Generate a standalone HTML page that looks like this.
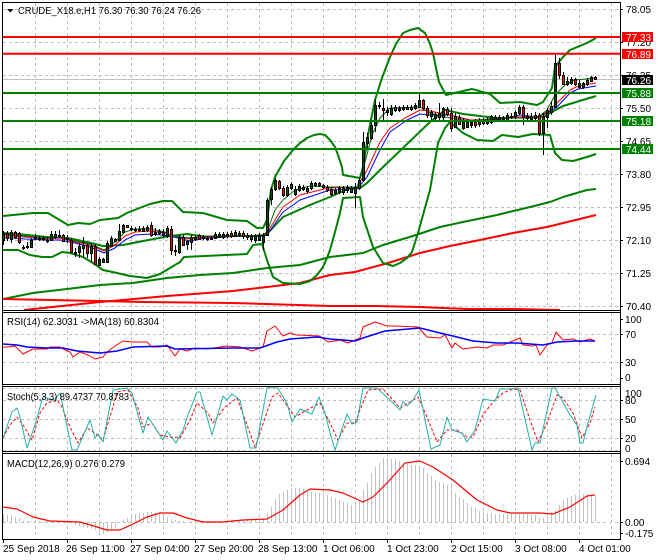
<!DOCTYPE html>
<html><head><meta charset="utf-8"><style>
html,body{margin:0;padding:0;background:#fff}
svg{display:block}
text{font-family:"Liberation Sans",sans-serif;font-size:10px;fill:#000}
.g{stroke:#c0c0c0;stroke-width:1;stroke-dasharray:3 3;fill:none}
.f{stroke:#000;stroke-width:1;fill:none}
.b{fill:none;stroke:#008000;stroke-width:2}
.r{fill:none;stroke:#f00;stroke-width:2}
polyline{stroke-linejoin:round}
.h{font-size:10.5px}
</style></head><body>
<svg width="660" height="560" viewBox="0 0 660 560" xmlns="http://www.w3.org/2000/svg">
<defs>
<clipPath id="c1"><rect x="3" y="3" width="617" height="307"/></clipPath>
<clipPath id="c3"><rect x="3" y="387" width="617" height="64"/></clipPath>
</defs>
<rect width="660" height="560" fill="#fff"/>
<!-- grid -->
<path class="g" d="M3 9.5H620M3 42.5H620M3 75.5H620M3 108.5H620M3 141.5H620M3 174.5H620M3 207.5H620M3 240.5H620M3 273.5H620M3 306.5H620M3 334.5H620M3 362.5H620M3 388.5H620M3 400.5H620M3 419.5H620M3 438.5H620M3 450.5H620M3 522.5H620"/>
<path class="g" d="M35.5 3V310M67.5 3V310M99.5 3V310M131.5 3V310M163.5 3V310M195.5 3V310M227.5 3V310M259.5 3V310M291.5 3V310M323.5 3V310M355.5 3V310M387.5 3V310M419.5 3V310M451.5 3V310M483.5 3V310M515.5 3V310M547.5 3V310M579.5 3V310M611.5 3V310M35.5 313V384M67.5 313V384M99.5 313V384M131.5 313V384M163.5 313V384M195.5 313V384M227.5 313V384M259.5 313V384M291.5 313V384M323.5 313V384M355.5 313V384M387.5 313V384M419.5 313V384M451.5 313V384M483.5 313V384M515.5 313V384M547.5 313V384M579.5 313V384M611.5 313V384M35.5 387V451M67.5 387V451M99.5 387V451M131.5 387V451M163.5 387V451M195.5 387V451M227.5 387V451M259.5 387V451M291.5 387V451M323.5 387V451M355.5 387V451M387.5 387V451M419.5 387V451M451.5 387V451M483.5 387V451M515.5 387V451M547.5 387V451M579.5 387V451M611.5 387V451M35.5 454V539M67.5 454V539M99.5 454V539M131.5 454V539M163.5 454V539M195.5 454V539M227.5 454V539M259.5 454V539M291.5 454V539M323.5 454V539M355.5 454V539M387.5 454V539M419.5 454V539M451.5 454V539M483.5 454V539M515.5 454V539M547.5 454V539M579.5 454V539M611.5 454V539"/>
<!-- current price -->
<path d="M3 79.5H620" stroke="#c0c0c0" fill="none"/>
<g clip-path="url(#c1)">
<!-- long MAs -->
<polyline class="b" points="3,299 33,293 67,289 100,285 133,283 167,278 200,275 233,273 267,268 300,265 330,257 347,255 363,253 383,245 413,236 440,227 463,222 497,215 530,207 550,202 563,197 587,190 596,189"/>
<polyline class="r" points="24,310 100,302 167,296 233,291 267,287 300,283 330,275 355,272 388,263 420,253 450,246 480,240 513,233 547,227 596,215"/>
<polyline class="r" points="3,299 143,302 233,303 330,306 375,306 420,307 467,309 513,309 560,310"/>
<!-- bollinger -->
<polyline class="b" points="3,216 33,213 48,213 58,219 68,225 78,223 90,224 100,220 118,218 127,213 137,209 150,204 163,201 172,201 183,212 203,213 227,220 247,221 257,228 263,228 267,220 271,190 275,177 284,161 293,150 300,143 307,138 314,135 320,134 325,135 330,140 335,147 338,155 342,167 343,175 360,178 363,167 369,130 375,100 382,78 390,57 396,44 403,33 410,30 418,28 425,33 430,44 433,53 436,68 439,82 446,95 463,91 472,89 490,94 500,103 520,102 537,105 543,102 552,88 555,67 563,57 570,50 587,43 596,38"/>
<polyline class="b" points="3,250 18,250 30,255 42,257 52,257 62,252 70,253 83,257 93,263 103,270 117,273 130,276 147,278 160,274 170,268 180,262 184,257 247,254 253,245 262,244 267,260 273,277 283,283 300,284 310,281 317,275 323,267 327,258 330,250 335,232 340,213 343,198 360,197 363,217 373,247 383,263 393,266 400,263 407,258 412,252 418,233 423,215 430,190 438,143 445,128 450,122 463,133 477,140 493,141 502,135 518,137 533,134 550,135 555,153 562,160 573,161 587,157 596,154"/>
<polyline class="b" points="3,233 17,234 47,237 68,238 87,242 103,246 123,245 143,241 170,236 187,234 207,237 233,236 260,236 267,234 283,217 310,205 330,197 350,188 360,188 367,183 380,170 430,122 445,110 463,114 497,118 543,117 550,113 563,106 596,96"/>
<!-- small MAs -->
<polyline fill="none" stroke="#0000ff" points="3,237 25,239 45,240 60,240 75,243 90,247 104,253 115,248 125,240 135,235 150,234 170,236 190,241 207,238 240,236 262,236 267,235 283,212 300,200 330,190 357,189 367,177 380,150 390,132 407,120 420,114 430,115 450,115 470,120 497,120 510,117 520,115 537,117 547,113 557,107 570,93 578,89 596,86"/>
<polyline fill="none" stroke="#ff0000" points="3,235 25,237 45,239 60,238 75,242 90,245 104,251 115,245 125,236 135,232 150,231 165,233 172,236 190,239 207,237 240,236 262,235 267,233 283,207 300,195 328,188 357,187 367,170 380,142 390,128 405,118 420,110 430,111 450,115 470,120 497,119 510,117 537,117 547,112 557,103 570,90 578,86 596,83"/>
<polyline fill="none" stroke="#006400" points="3,234 25,236 45,238 60,237 75,241 90,244 104,250 115,242 125,232 135,229 150,229 165,232 172,236 190,238 207,236 240,236 262,235 267,232 275,210 283,200 295,190 310,186 328,187 357,187 363,170 372,135 380,118 390,108 420,107 430,113 445,117 470,121 497,118 537,118 547,110 555,95 565,85 575,80 596,78"/>
<!-- wicks -->
<path stroke="#000" fill="none" d="M3.5 231V245M7.5 231V241M11.5 230V243M15.5 231V239M19.5 232V244M23.5 245V250M27.5 242V249M31.5 238V247M35.5 234V240M39.5 236V241M43.5 236V241M47.5 237V243M51.5 231V241M55.5 231V239M59.5 230V238M63.5 234V242M67.5 235V243M71.5 238V253M75.5 248V257M79.5 243V258M83.5 237V257M87.5 243V258M91.5 243V262M95.5 244V265M99.5 257V265M103.5 258V262M107.5 241V263M111.5 236V247M115.5 238V242M119.5 224V241M123.5 224V233M127.5 225V228M131.5 226V231M135.5 227V232M139.5 226V232M143.5 226V232M147.5 225V232M151.5 222V237M155.5 228V236M159.5 229V235M163.5 229V237M167.5 226V238M171.5 226V255M175.5 245V256M179.5 235V254M183.5 235V246M187.5 240V250M191.5 235V250M195.5 235V241M199.5 234V240M203.5 235V240M207.5 236V241M211.5 236V240M215.5 232V239M219.5 232V238M223.5 232V239M227.5 232V238M231.5 231V238M235.5 230V237M239.5 231V237M243.5 231V239M247.5 233V240M251.5 234V242M255.5 234V243M259.5 233V241M263.5 233V250M267.5 198V236M271.5 187V205M275.5 178V191M279.5 180V190M283.5 186V197M287.5 185V197M291.5 182V190M295.5 186V196M299.5 184V192M303.5 185V191M307.5 186V193M311.5 181V190M315.5 182V187M319.5 182V187M323.5 184V189M327.5 185V192M331.5 187V196M335.5 188V195M339.5 186V194M343.5 186V195M347.5 185V193M351.5 186V193M355.5 183V208M359.5 178V190M363.5 132V182M367.5 133V150M371.5 122V140M375.5 100V132M379.5 102V109M383.5 99V120M387.5 107V116M391.5 105V116M395.5 105V112M399.5 106V112M403.5 105V111M407.5 105V110M411.5 105V111M415.5 103V110M419.5 94V108M423.5 99V110M427.5 106V118M431.5 110V120M435.5 112V122M439.5 103V120M443.5 107V121M447.5 107V116M451.5 108V132M455.5 113V128M459.5 115V125M463.5 118V130M467.5 119V128M471.5 120V128M475.5 119V128M479.5 118V127M483.5 118V125M487.5 117V125M491.5 115V124M495.5 115V122M499.5 115V121M503.5 116V122M507.5 113V122M511.5 113V119M515.5 110V119M519.5 105V115M523.5 105V125M527.5 113V122M531.5 113V122M535.5 112V122M539.5 113V136M543.5 113V155M547.5 108V128M551.5 102V115M555.5 55V108M559.5 58V79M563.5 72V85M567.5 77V86M571.5 77V85M575.5 78V86M579.5 80V88M583.5 82V89M587.5 78V86M591.5 76V82M595.5 76V80"/>
<!-- bull / neutral bodies -->
<path fill="#005500" stroke="#000" d="M2.5 233.5h2v7h-2zM10.5 232.5h2v7h-2zM22.5 247.5h2v1h-2zM26.5 246.5h2v1h-2zM30.5 240.5h2v7h-2zM34.5 237.5h2v1h-2zM38.5 238.5h2v1h-2zM42.5 238.5h2v1h-2zM46.5 240.5h2v1h-2zM50.5 234.5h2v6h-2zM54.5 234.5h2v3h-2zM58.5 235.5h2v1h-2zM66.5 238.5h2v1h-2zM74.5 252.5h2v1h-2zM78.5 246.5h2v6h-2zM82.5 245.5h2v3h-2zM90.5 246.5h2v7h-2zM98.5 259.5h2v6h-2zM102.5 259.5h2v3h-2zM106.5 243.5h2v19h-2zM110.5 238.5h2v8h-2zM114.5 239.5h2v2h-2zM118.5 231.5h2v9h-2zM122.5 225.5h2v7h-2zM130.5 228.5h2v1h-2zM134.5 229.5h2v1h-2zM138.5 229.5h2v1h-2zM142.5 228.5h2v3h-2zM146.5 227.5h2v3h-2zM154.5 232.5h2v2h-2zM158.5 231.5h2v2h-2zM162.5 232.5h2v3h-2zM166.5 228.5h2v8h-2zM174.5 250.5h2v1h-2zM178.5 237.5h2v15h-2zM186.5 241.5h2v3h-2zM190.5 237.5h2v5h-2zM194.5 237.5h2v2h-2zM202.5 237.5h2v1h-2zM206.5 238.5h2v1h-2zM210.5 238.5h2v1h-2zM214.5 234.5h2v4h-2zM218.5 234.5h2v3h-2zM222.5 234.5h2v3h-2zM226.5 234.5h2v2h-2zM234.5 232.5h2v4h-2zM238.5 233.5h2v2h-2zM246.5 235.5h2v2h-2zM250.5 236.5h2v3h-2zM254.5 236.5h2v4h-2zM258.5 235.5h2v5h-2zM262.5 235.5h2v7h-2zM266.5 200.5h2v35h-2zM270.5 189.5h2v10h-2zM274.5 180.5h2v9h-2zM286.5 187.5h2v8h-2zM290.5 184.5h2v4h-2zM294.5 189.5h2v5h-2zM298.5 186.5h2v4h-2zM302.5 187.5h2v2h-2zM306.5 188.5h2v3h-2zM310.5 183.5h2v5h-2zM314.5 183.5h2v2h-2zM322.5 185.5h2v2h-2zM334.5 190.5h2v3h-2zM338.5 188.5h2v4h-2zM342.5 188.5h2v4h-2zM346.5 187.5h2v3h-2zM350.5 188.5h2v4h-2zM354.5 187.5h2v6h-2zM358.5 180.5h2v8h-2zM362.5 142.5h2v38h-2zM366.5 137.5h2v6h-2zM370.5 125.5h2v13h-2zM374.5 105.5h2v20h-2zM378.5 105.5h2v1h-2zM386.5 110.5h2v2h-2zM390.5 108.5h2v6h-2zM394.5 107.5h2v3h-2zM398.5 108.5h2v2h-2zM402.5 107.5h2v2h-2zM406.5 107.5h2v2h-2zM410.5 107.5h2v2h-2zM414.5 105.5h2v3h-2zM418.5 100.5h2v7h-2zM430.5 112.5h2v4h-2zM434.5 114.5h2v4h-2zM438.5 113.5h2v4h-2zM442.5 108.5h2v9h-2zM454.5 116.5h2v11h-2zM462.5 122.5h2v6h-2zM466.5 122.5h2v5h-2zM470.5 122.5h2v3h-2zM478.5 120.5h2v4h-2zM486.5 120.5h2v3h-2zM490.5 116.5h2v6h-2zM494.5 117.5h2v3h-2zM498.5 117.5h2v2h-2zM502.5 118.5h2v2h-2zM506.5 115.5h2v5h-2zM510.5 116.5h2v1h-2zM514.5 112.5h2v4h-2zM518.5 107.5h2v6h-2zM526.5 116.5h2v2h-2zM530.5 116.5h2v3h-2zM534.5 115.5h2v3h-2zM542.5 116.5h2v17h-2zM546.5 110.5h2v7h-2zM550.5 106.5h2v6h-2zM554.5 63.5h2v44h-2zM566.5 81.5h2v3h-2zM570.5 79.5h2v4h-2zM578.5 83.5h2v4h-2zM582.5 83.5h2v4h-2zM586.5 80.5h2v4h-2zM590.5 77.5h2v4h-2z"/>
<!-- bear bodies -->
<path fill="#ff0000" stroke="#000" d="M6.5 233.5h2v5h-2zM14.5 232.5h2v5h-2zM18.5 233.5h2v9h-2zM62.5 235.5h2v6h-2zM70.5 240.5h2v12h-2zM86.5 245.5h2v8h-2zM94.5 246.5h2v18h-2zM126.5 225.5h2v2h-2zM150.5 225.5h2v10h-2zM170.5 229.5h2v21h-2zM182.5 237.5h2v8h-2zM198.5 235.5h2v4h-2zM230.5 233.5h2v3h-2zM242.5 233.5h2v3h-2zM278.5 181.5h2v7h-2zM282.5 188.5h2v7h-2zM318.5 183.5h2v2h-2zM326.5 187.5h2v3h-2zM330.5 189.5h2v5h-2zM382.5 108.5h2v2h-2zM422.5 100.5h2v8h-2zM426.5 108.5h2v7h-2zM446.5 109.5h2v5h-2zM450.5 113.5h2v15h-2zM458.5 117.5h2v7h-2zM474.5 120.5h2v5h-2zM482.5 120.5h2v3h-2zM522.5 107.5h2v10h-2zM538.5 115.5h2v18h-2zM558.5 63.5h2v12h-2zM562.5 75.5h2v9h-2zM574.5 79.5h2v5h-2zM594.5 77.5h2v2h-2z"/>
</g>
<!-- levels -->
<path d="M3 37H620M3 53.7H620" stroke="#f00" stroke-width="2" fill="none"/>
<path d="M3 93H620M3 121H620M3 149H620" stroke="#008000" stroke-width="2" fill="none"/>
<!-- RSI -->
<polyline fill="none" stroke="#ff0000" points="3,347 8,347 15,346 23,354 33,349 47,349 50,347 60,347 63,349 70,352 73,357 80,352 88,355 95,359 103,357 107,352 115,346 123,341 132,342 147,342 152,347 160,347 167,345 175,356 180,349 187,351 195,348 207,349 227,346 240,347 252,351 263,347 267,331 275,326 283,336 290,333 297,335 320,336 328,342 340,340 348,343 360,338 363,327 375,322 387,326 395,326 418,327 427,337 440,338 445,335 452,348 455,343 463,349 477,347 487,348 493,345 503,345 520,338 523,345 533,346 536,345 540,355 547,345 552,343 556,332 563,340 573,339 580,342 590,339 595,341"/>
<polyline fill="none" stroke="#0000ff" stroke-width="1.5" points="3,344 17,345 27,347 47,348 63,348 77,351 100,353 117,351 133,347 167,346 175,349 233,348 260,348 277,342 290,339 317,337 330,339 355,341 363,338 385,331 420,328 440,333 453,336 473,341 497,343 517,343 543,345 557,342 577,341 595,341"/>
<!-- Stoch -->
<g clip-path="url(#c3)">
<polyline fill="none" stroke="#ff0000" stroke-dasharray="3 2" points="3,438 10,425 17,417 23,425 32,440 40,413 47,403 57,400 62,407 70,427 78,443 87,428 95,433 103,440 112,410 117,392 128,390 138,408 143,427 152,423 160,435 170,437 180,438 190,420 197,403 208,413 213,423 225,407 237,398 247,425 255,447 262,427 272,397 278,393 288,407 295,417 307,410 320,403 330,423 338,440 347,423 355,423 360,410 368,390 383,389 400,408 410,402 418,397 427,417 437,442 447,430 457,430 467,437 473,437 483,415 493,402 503,393 513,389 520,390 530,420 538,442 547,423 557,395 563,398 573,413 582,438 590,423 595,407"/>
<polyline fill="none" stroke="#20b2aa" stroke-width="1" points="3,438 12,412 17,408 20,417 27,448 35,425 42,400 44,396 50,400 55,399 60,393 72,450 77,450 90,420 95,438 98,434 103,442 113,390 127,388 132,393 143,433 148,417 163,440 167,431 176,443 183,430 188,415 197,392 200,392 212,435 223,396 227,400 232,394 240,400 250,448 256,448 267,388 277,387 287,403 292,422 300,409 312,414 319,397 325,413 330,433 335,450 347,414 352,424 357,422 363,388 377,388 393,403 400,410 403,401 407,406 413,400 419,390 431,449 440,445 447,417 452,430 462,433 467,442 475,430 483,399 495,401 500,389 510,389 518,388 532,450 535,443 540,443 552,388 555,388 570,415 577,425 580,443 583,443 588,423 596,395"/>
</g>
<!-- MACD histogram -->
<path stroke="#c0c0c0" fill="none" d="M3.5 522V514M7.5 522V515M11.5 522V515M15.5 522V517M19.5 522V518M23.5 522V521M27.5 522V521M31.5 522V521M35.5 522V521M39.5 522V521M43.5 522V521M47.5 522V521M51.5 522V521M55.5 522V521M59.5 522V521M63.5 522V521M67.5 522V521M71.5 522V523M75.5 522V525M79.5 522V526M83.5 522V527M87.5 522V528M91.5 522V529M95.5 522V530M99.5 522V531M103.5 522V534M107.5 522V532M111.5 522V530M115.5 522V528M119.5 522V523M123.5 522V519M127.5 522V518M131.5 522V516M135.5 522V514M139.5 522V513M143.5 522V513M147.5 522V512M151.5 522V512M155.5 522V513M159.5 522V514M163.5 522V514M167.5 522V517M171.5 522V519M175.5 522V520M179.5 522V521M183.5 522V521M187.5 522V521M191.5 522V521M195.5 522V521M199.5 522V521M203.5 522V521M207.5 522V521M211.5 522V521M215.5 522V521M219.5 522V521M223.5 522V521M227.5 522V520M231.5 522V520M235.5 522V520M239.5 522V520M243.5 522V520M247.5 522V520M251.5 522V520M255.5 522V520M259.5 522V520M263.5 522V519M267.5 522V513M271.5 522V507M275.5 522V499M279.5 522V494M283.5 522V492M287.5 522V490M291.5 522V488M295.5 522V488M299.5 522V488M303.5 522V489M307.5 522V490M311.5 522V492M315.5 522V493M319.5 522V493M323.5 522V494M327.5 522V495M331.5 522V497M335.5 522V498M339.5 522V500M343.5 522V502M347.5 522V503M351.5 522V505M355.5 522V505M359.5 522V500M363.5 522V490M367.5 522V483M371.5 522V473M375.5 522V467M379.5 522V463M383.5 522V458M387.5 522V458M391.5 522V459M395.5 522V459M399.5 522V461M403.5 522V463M407.5 522V464M411.5 522V465M415.5 522V465M419.5 522V466M423.5 522V468M427.5 522V473M431.5 522V476M435.5 522V480M439.5 522V482M443.5 522V483M447.5 522V485M451.5 522V487M455.5 522V493M459.5 522V497M463.5 522V499M467.5 522V503M471.5 522V507M475.5 522V508M479.5 522V511M483.5 522V512M487.5 522V513M491.5 522V513M495.5 522V514M499.5 522V514M503.5 522V514M507.5 522V514M511.5 522V514M515.5 522V514M519.5 522V514M523.5 522V514M527.5 522V514M531.5 522V515M535.5 522V515M539.5 522V518M543.5 522V518M547.5 522V516M551.5 522V512M555.5 522V510M559.5 522V505M563.5 522V500M567.5 522V498M571.5 522V496M575.5 522V495M579.5 522V494M583.5 522V494M587.5 522V494M591.5 522V495M595.5 522V496"/>
<polyline fill="none" stroke="#ff0000" stroke-width="1.2" points="3,507 17,509 33,517 50,521 80,522 97,527 107,530 120,530 133,524 147,517 160,513 173,513 187,518 203,522 223,522 243,520 267,519 283,510 300,495 310,489 330,490 343,493 363,502 373,497 388,482 405,463 420,461 433,467 453,480 477,500 497,510 510,513 540,513 553,514 570,507 587,496 595,495"/>
<!-- frames -->
<path class="f" d="M2.5 2.5H620.5V539.5H2.5ZM2.5 310.5H620.5M2.5 312.5H620.5M2.5 384.5H620.5M2.5 386.5H620.5M2.5 451.5H620.5M2.5 453.5H620.5"/>
<!-- axis ticks -->
<path class="f" d="M620 9.5h3M620 42.5h3M620 75.5h3M620 108.5h3M620 141.5h3M620 174.5h3M620 207.5h3M620 240.5h3M620 273.5h3M620 306.5h3M620 319.5h3M620 334.5h3M620 362.5h3M620 378.5h3M620 400.5h3M620 419.5h3M620 438.5h3M620 461.5h3M620 522.5h3M620 533.5h3M3.5 539v4M67.5 539v4M131.5 539v4M195.5 539v4M259.5 539v4M323.5 539v4M387.5 539v4M451.5 539v4M515.5 539v4M579.5 539v4"/>
<!-- header -->
<path d="M7 9h6.5l-3.2 3.5z" fill="#000"/>
<text class="h" x="18" y="14" textLength="183" lengthAdjust="spacingAndGlyphs">CRUDE_X18.e,H1  76.30 76.30 76.24 76.26</text>
<text class="h" x="7" y="325" textLength="152" lengthAdjust="spacingAndGlyphs">RSI(14) 62.3031  -&gt;MA(18) 60.8304</text>
<text class="h" x="7" y="400" textLength="122" lengthAdjust="spacingAndGlyphs">Stoch(5,3,3) 89.4737 70.8783</text>
<text class="h" x="7" y="467" textLength="118" lengthAdjust="spacingAndGlyphs">MACD(12,26,9) 0.276 0.279</text>
<!-- price labels -->
<text x="626" y="13">78.05</text>
<text x="626" y="46">77.20</text>
<text x="626" y="79">76.35</text>
<text x="626" y="112">75.50</text>
<text x="626" y="145">74.65</text>
<text x="626" y="178">73.80</text>
<text x="626" y="211">72.95</text>
<text x="626" y="244">72.10</text>
<text x="626" y="277">71.25</text>
<text x="626" y="310">70.40</text>
<rect x="622" y="32" width="31" height="10" fill="#f00"/><text x="626" y="41" style="fill:#fff">77.33</text>
<rect x="622" y="49" width="31" height="10" fill="#f00"/><text x="626" y="58" style="fill:#fff">76.89</text>
<rect x="622" y="75" width="31" height="10" fill="#000"/><text x="626" y="84" style="fill:#fff">76.26</text>
<rect x="622" y="88" width="31" height="10" fill="#008000"/><text x="626" y="97" style="fill:#fff">75.88</text>
<rect x="622" y="116" width="31" height="10" fill="#008000"/><text x="626" y="125" style="fill:#fff">75.18</text>
<rect x="622" y="144" width="31" height="10" fill="#008000"/><text x="626" y="153" style="fill:#fff">74.44</text>
<text x="625" y="323">100</text><text x="625" y="338">70</text><text x="625" y="366">30</text><text x="625" y="381">0</text>
<text x="625" y="397">100</text><text x="625" y="404">80</text><text x="625" y="423">50</text><text x="625" y="442">20</text><text x="625" y="452">0</text>
<text x="625" y="465">0.694</text><text x="625" y="526">0.00</text><text x="625" y="537">-0.175</text>
<!-- time labels -->
<text x="3" y="552">25 Sep 2018</text>
<text x="66" y="552">26 Sep 11:00</text>
<text x="130" y="552">27 Sep 04:00</text>
<text x="194" y="552">27 Sep 20:00</text>
<text x="258" y="552">28 Sep 13:00</text>
<text x="323" y="552">1 Oct 06:00</text>
<text x="387" y="552">1 Oct 23:00</text>
<text x="451" y="552">2 Oct 15:00</text>
<text x="515" y="552">3 Oct 08:00</text>
<text x="579" y="552">4 Oct 01:00</text>
</svg>
</body></html>
